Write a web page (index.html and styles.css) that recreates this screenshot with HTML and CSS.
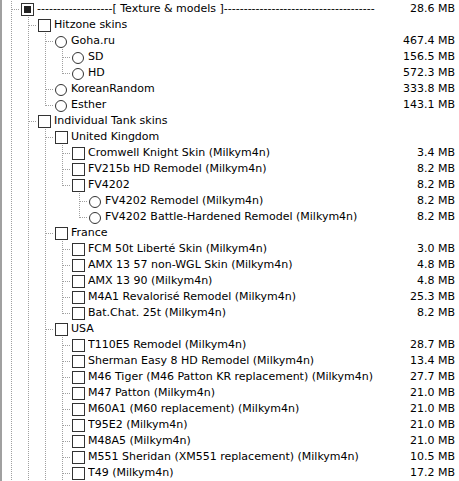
FILE: index.html
```html
<!DOCTYPE html>
<html>
<head>
<meta charset="utf-8">
<link rel="stylesheet" href="styles.css">
</head>
<body>
<div class="tree">
  <div class="row"><span class="g tee"></span><span class="box partial"><span class="fill"></span></span><span class="label">-------------------[ Texture &amp; models ]--------------------------------------</span><span class="size">28.6 MB</span></div>
  <div class="row"><span class="g pipe"></span><span class="g tee"></span><span class="box"></span><span class="label">Hitzone skins</span></div>
  <div class="row"><span class="g pipe"></span><span class="g pipe"></span><span class="g tee"></span><span class="radio"></span><span class="label">Goha.ru</span><span class="size">467.4 MB</span></div>
  <div class="row"><span class="g pipe"></span><span class="g pipe"></span><span class="g pipe"></span><span class="g tee"></span><span class="radio"></span><span class="label">SD</span><span class="size">156.5 MB</span></div>
  <div class="row"><span class="g pipe"></span><span class="g pipe"></span><span class="g pipe"></span><span class="g elbow"></span><span class="radio"></span><span class="label">HD</span><span class="size">572.3 MB</span></div>
  <div class="row"><span class="g pipe"></span><span class="g pipe"></span><span class="g tee"></span><span class="radio"></span><span class="label">KoreanRandom</span><span class="size">333.8 MB</span></div>
  <div class="row"><span class="g pipe"></span><span class="g pipe"></span><span class="g elbow"></span><span class="radio"></span><span class="label">Esther</span><span class="size">143.1 MB</span></div>
  <div class="row"><span class="g pipe"></span><span class="g tee"></span><span class="box"></span><span class="label">Individual Tank skins</span></div>
  <div class="row"><span class="g pipe"></span><span class="g pipe"></span><span class="g tee"></span><span class="box"></span><span class="label">United Kingdom</span></div>
  <div class="row"><span class="g pipe"></span><span class="g pipe"></span><span class="g pipe"></span><span class="g tee"></span><span class="box"></span><span class="label">Cromwell Knight Skin (Milkym4n)</span><span class="size">3.4 MB</span></div>
  <div class="row"><span class="g pipe"></span><span class="g pipe"></span><span class="g pipe"></span><span class="g tee"></span><span class="box"></span><span class="label">FV215b HD Remodel (Milkym4n)</span><span class="size">8.2 MB</span></div>
  <div class="row"><span class="g pipe"></span><span class="g pipe"></span><span class="g pipe"></span><span class="g elbow"></span><span class="box"></span><span class="label">FV4202</span><span class="size">8.2 MB</span></div>
  <div class="row"><span class="g pipe"></span><span class="g pipe"></span><span class="g pipe"></span><span class="g"></span><span class="g tee"></span><span class="radio"></span><span class="label">FV4202 Remodel (Milkym4n)</span><span class="size">8.2 MB</span></div>
  <div class="row"><span class="g pipe"></span><span class="g pipe"></span><span class="g pipe"></span><span class="g"></span><span class="g elbow"></span><span class="radio"></span><span class="label">FV4202 Battle-Hardened Remodel (Milkym4n)</span><span class="size">8.2 MB</span></div>
  <div class="row"><span class="g pipe"></span><span class="g pipe"></span><span class="g tee"></span><span class="box"></span><span class="label">France</span></div>
  <div class="row"><span class="g pipe"></span><span class="g pipe"></span><span class="g pipe"></span><span class="g tee"></span><span class="box"></span><span class="label">FCM 50t Liberté Skin (Milkym4n)</span><span class="size">3.0 MB</span></div>
  <div class="row"><span class="g pipe"></span><span class="g pipe"></span><span class="g pipe"></span><span class="g tee"></span><span class="box"></span><span class="label">AMX 13 57 non-WGL Skin (Milkym4n)</span><span class="size">4.8 MB</span></div>
  <div class="row"><span class="g pipe"></span><span class="g pipe"></span><span class="g pipe"></span><span class="g tee"></span><span class="box"></span><span class="label">AMX 13 90 (Milkym4n)</span><span class="size">4.8 MB</span></div>
  <div class="row"><span class="g pipe"></span><span class="g pipe"></span><span class="g pipe"></span><span class="g tee"></span><span class="box"></span><span class="label">M4A1 Revalorisé Remodel (Milkym4n)</span><span class="size">25.3 MB</span></div>
  <div class="row"><span class="g pipe"></span><span class="g pipe"></span><span class="g pipe"></span><span class="g elbow"></span><span class="box"></span><span class="label">Bat.Chat. 25t (Milkym4n)</span><span class="size">8.2 MB</span></div>
  <div class="row"><span class="g pipe"></span><span class="g pipe"></span><span class="g tee"></span><span class="box"></span><span class="label">USA</span></div>
  <div class="row"><span class="g pipe"></span><span class="g pipe"></span><span class="g pipe"></span><span class="g tee"></span><span class="box"></span><span class="label">T110E5 Remodel (Milkym4n)</span><span class="size">28.7 MB</span></div>
  <div class="row"><span class="g pipe"></span><span class="g pipe"></span><span class="g pipe"></span><span class="g tee"></span><span class="box"></span><span class="label">Sherman Easy 8 HD Remodel (Milkym4n)</span><span class="size">13.4 MB</span></div>
  <div class="row"><span class="g pipe"></span><span class="g pipe"></span><span class="g pipe"></span><span class="g tee"></span><span class="box"></span><span class="label">M46 Tiger (M46 Patton KR replacement) (Milkym4n)</span><span class="size">27.7 MB</span></div>
  <div class="row"><span class="g pipe"></span><span class="g pipe"></span><span class="g pipe"></span><span class="g tee"></span><span class="box"></span><span class="label">M47 Patton (Milkym4n)</span><span class="size">21.0 MB</span></div>
  <div class="row"><span class="g pipe"></span><span class="g pipe"></span><span class="g pipe"></span><span class="g tee"></span><span class="box"></span><span class="label">M60A1 (M60 replacement) (Milkym4n)</span><span class="size">21.0 MB</span></div>
  <div class="row"><span class="g pipe"></span><span class="g pipe"></span><span class="g pipe"></span><span class="g tee"></span><span class="box"></span><span class="label">T95E2 (Milkym4n)</span><span class="size">21.0 MB</span></div>
  <div class="row"><span class="g pipe"></span><span class="g pipe"></span><span class="g pipe"></span><span class="g tee"></span><span class="box"></span><span class="label">M48A5 (Milkym4n)</span><span class="size">21.0 MB</span></div>
  <div class="row"><span class="g pipe"></span><span class="g pipe"></span><span class="g pipe"></span><span class="g tee"></span><span class="box"></span><span class="label">M551 Sheridan (XM551 replacement) (Milkym4n)</span><span class="size">10.5 MB</span></div>
  <div class="row"><span class="g pipe"></span><span class="g pipe"></span><span class="g pipe"></span><span class="g tee"></span><span class="box"></span><span class="label">T49 (Milkym4n)</span><span class="size">17.2 MB</span></div>
</div>
</body>
</html>
```

FILE: styles.css
```css
html, body {
  margin: 0;
  padding: 0;
  background: #fff;
}

.tree {
  height: 481px;
  overflow: hidden;
  border-left: 2px solid #a0a0a0;
  padding-top: 1px;
  box-sizing: border-box;
  font-family: "DejaVu Sans", sans-serif;
  font-size: 11px;
  color: #000;
}

.row {
  display: flex;
  align-items: flex-start;
  height: 16px;
  padding-right: 4px;
  white-space: nowrap;
}

/* indentation guides: dotted tree lines */
.g {
  flex: none;
  width: 17px;
  height: 16px;
  background-repeat: no-repeat;
}

.pipe {
  background-image: repeating-linear-gradient(to bottom, #a0a0a0 0 1px, transparent 1px 2px);
  background-size: 1px 16px;
  background-position: 9px 0;
}

.tee {
  background-image:
    repeating-linear-gradient(to bottom, #a0a0a0 0 1px, transparent 1px 2px),
    repeating-linear-gradient(to right, #a0a0a0 0 1px, transparent 1px 2px);
  background-size: 1px 16px, 7px 1px;
  background-position: 9px 0, 10px 8px;
}

.elbow {
  background-image:
    repeating-linear-gradient(to bottom, #a0a0a0 0 1px, transparent 1px 2px),
    repeating-linear-gradient(to right, #a0a0a0 0 1px, transparent 1px 2px);
  background-size: 1px 9px, 7px 1px;
  background-position: 9px 0, 10px 8px;
}

/* check box */
.box {
  flex: none;
  box-sizing: border-box;
  width: 13px;
  height: 13px;
  margin: 2px 3px 0 2px;
  border: 1px solid #333;
  background: #fff;
  display: flex;
  align-items: center;
  justify-content: center;
}

.box .fill {
  width: 7px;
  height: 7px;
  background: #222;
}

/* radio button */
.radio {
  flex: none;
  box-sizing: border-box;
  width: 12px;
  height: 12px;
  margin: 3px 4px 0 2px;
  border: 1px solid #333;
  border-radius: 50%;
  background: #fff;
}

.label {
  flex: 1 1 auto;
  line-height: 16px;
  overflow: hidden;
}

.size {
  flex: none;
  margin-left: auto;
  line-height: 16px;
  text-align: right;
}
```
